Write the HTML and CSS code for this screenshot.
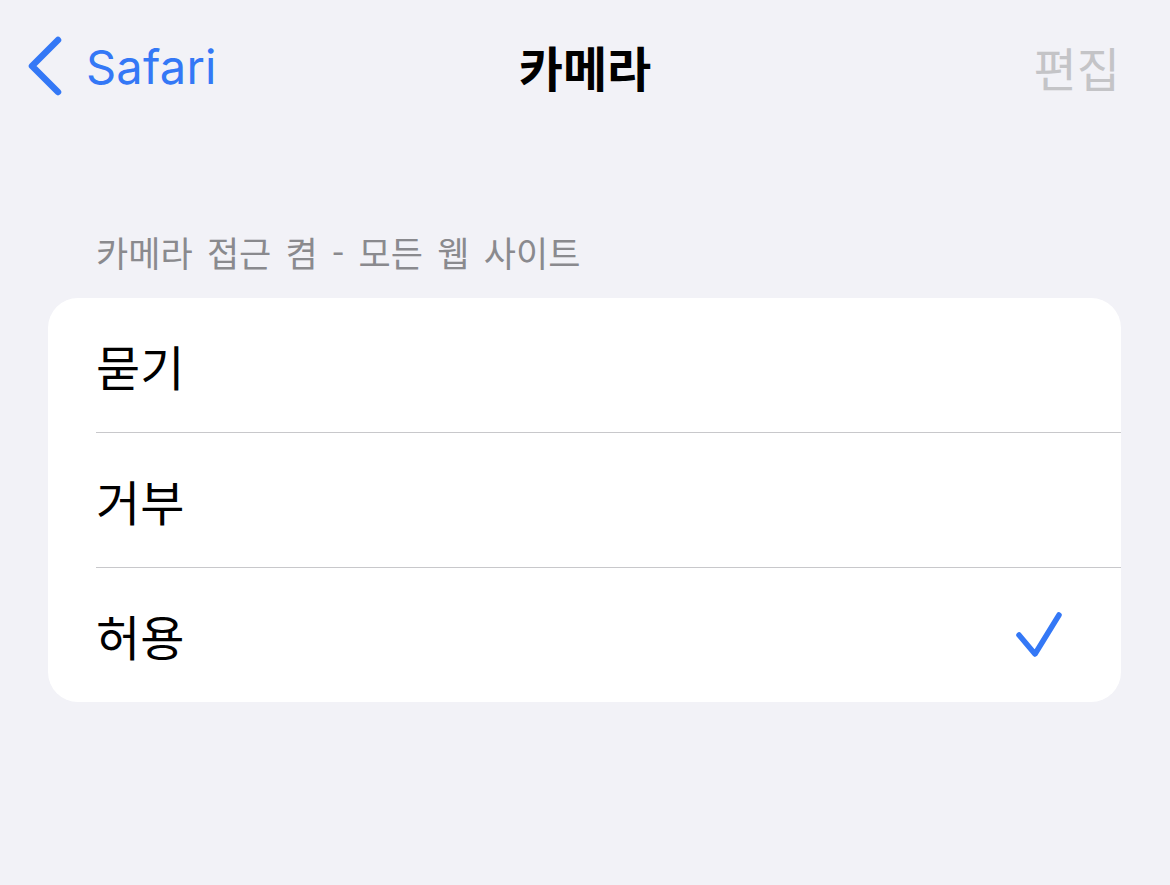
FILE: index.html
```html
<!DOCTYPE html>
<html lang="ko">
<head>
<meta charset="utf-8">
<link rel="stylesheet" href="styles.css">
</head>
<body>
<div class="screen">
  <header class="nav">
    <div class="nav-back">
      <svg class="chevron" width="40" height="60" viewBox="0 0 40 60"><path d="M34 4 L8 30 L34 56" fill="none" stroke="#3478f6" stroke-width="6.5" stroke-linecap="round" stroke-linejoin="round"/></svg>
      <span class="back-label">Safari</span>
    </div>
    <div class="nav-title">카메라</div>
    <div class="nav-edit">편집</div>
  </header>
  <div class="section-header">카메라 접근 켬 - 모든 웹 사이트</div>
  <div class="card">
    <div class="row"><span class="row-label">묻기</span></div>
    <div class="row"><span class="row-label">거부</span></div>
    <div class="row"><span class="row-label">허용</span>
      <svg class="check" width="48" height="48" viewBox="0 0 48 48"><path d="M4 24 L20 43 L44 4" fill="none" stroke="#3478f6" stroke-width="5.5" stroke-linecap="round" stroke-linejoin="round"/></svg>
    </div>
  </div>
</div>
</body>
</html>
```
FILE: styles.css
```css
html, body {
  margin: 0;
  padding: 0;
  background: #f2f2f7;
}
body {
  font-family: Inter, "Noto Sans CJK KR", sans-serif;
  width: 1170px;
  height: 885px;
  overflow: hidden;
}
.screen {
  display: flex;
  flex-direction: column;
}
.nav {
  height: 132px;
  display: flex;
  align-items: center;
  justify-content: space-between;
  position: relative;
  padding: 0 50px 0 24px;
}
.nav-back {
  display: flex;
  align-items: center;
  gap: 22px;
  color: #3478f6;
}
.chevron {
  display: block;
}
.back-label {
  font-size: 47px;
  line-height: 1;
  letter-spacing: 0.2px;
}
.nav-title {
  position: absolute;
  left: 0;
  right: 0;
  text-align: center;
  font-family: "Noto Sans CJK KR", sans-serif;
  font-weight: 700;
  font-size: 48px;
  color: #000;
  pointer-events: none;
}
.nav-edit {
  font-family: "Noto Sans CJK KR", sans-serif;
  font-size: 47px;
  color: #c4c4c7;
}
.section-header {
  margin: 100px 0 26px 96px;
  height: 40px;
  line-height: 40px;
  font-family: "Noto Sans CJK KR", sans-serif;
  font-size: 35px;
  word-spacing: 4.5px;
  color: #8a8a8e;
}
.card {
  margin: 0 49px 0 48px;
  background: #fff;
  border-radius: 30px;
  display: flex;
  flex-direction: column;
}
.row {
  height: 134px;
  margin-left: 48px;
  padding-right: 58px;
  display: flex;
  align-items: center;
  justify-content: space-between;
}
.row + .row {
  border-top: 1px solid #c8c8cb;
}
.row-label {
  font-family: "Noto Sans CJK KR", sans-serif;
  font-size: 48px;
  color: #000;
}
.check {
  display: block;
}
```
